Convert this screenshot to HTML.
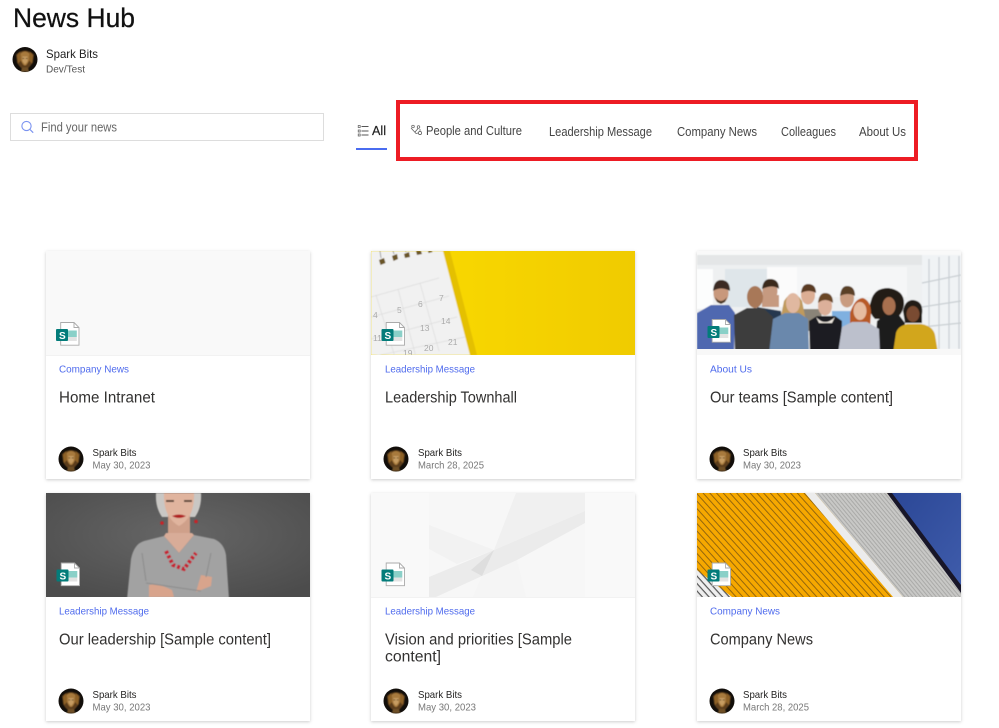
<!DOCTYPE html>
<html lang="en"><head><meta charset="utf-8"><title>News Hub</title>
<style>
html,body{margin:0;padding:0;background:#fff;width:999px;height:728px;overflow:hidden}
svg{display:block}
text{font-family:"Liberation Sans",sans-serif}
.cat{font-size:10.5px;fill:#4f6bed}
.ttl{font-size:15.5px;fill:#323130}
.nm{font-size:10.5px;fill:#252423}
.dt{font-size:10.5px;fill:#777}
.nav{font-size:12.5px;fill:#444}
</style></head><body>
<svg width="999" height="728" viewBox="0 0 999 728" xmlns="http://www.w3.org/2000/svg">
<defs>
<filter id="sh" x="-5%" y="-5%" width="110%" height="110%"><feDropShadow dx="0" dy="1" stdDeviation="1.6" flood-color="#000" flood-opacity=".2"/></filter>
<filter id="b" x="-5%" y="-5%" width="110%" height="110%"><feGaussianBlur stdDeviation=".55"/></filter>
<filter id="b2" x="-10%" y="-10%" width="120%" height="120%"><feGaussianBlur stdDeviation=".5"/></filter>
<g id="av">
<circle r="12.5" fill="#120e0a"/>
<g filter="url(#b2)">
<path d="M-9-5Q0-13 9-5L8 3Q5 7 3 9L-3 9Q-6 7-8 3Z" fill="#5c3c1a"/>
<path d="M-8-4L-5-8-4 1-7 4ZM8-4L5-8 4 1 7 4Z" fill="#8f6228"/>
<path d="M-4.500-6Q0-10 4.500-6L4 1Q2 6 0 6Q-2 6-4 1Z" fill="#a87a3c"/>
<path d="M-2.500-3H2.500V2L0 5-2.500 2Z" fill="#c69c62"/>
<path d="M-3 8H3L4 12H-4Z" fill="#6e5028"/>
<path d="M-2.500-1.500H-.8V-.7H-2.500ZM.8-1.500H2.500V-.7H.8Z" fill="#3a2510"/>
</g>
</g>
<g id="sp">
<path d="M14.7 71.500H28L33 76.500V94.200H14.700Z" fill="#fff" stroke="#aaa" stroke-width=".9"/>
<path d="M28 71.500V76.500H33" fill="none" stroke="#aaa" stroke-width=".9"/>
<rect x="21" y="79.500" width="9.800" height="6.500" fill="#8ad0c8"/>
<rect x="21" y="86" width="9.800" height="4" fill="#e3e3e3"/>
<rect x="10" y="78" width="12" height="12" rx="1" fill="#037c7a"/>
<text x="13" y="88" font-size="10" font-weight="700" fill="#fff">S</text>
</g>
<pattern id="st" width="5" height="5" patternUnits="userSpaceOnUse" patternTransform="rotate(48)"><rect width="5" height="5" fill="#f6a800"/><rect width="5" height="1" fill="#94660c"/></pattern>
<pattern id="st2" width="3" height="3" patternUnits="userSpaceOnUse" patternTransform="rotate(50)"><rect width="3" height="3" fill="#c8c8c6"/><rect width="3" height="1" fill="#aaaaa8"/></pattern>
<pattern id="st3" width="5" height="5" patternUnits="userSpaceOnUse" patternTransform="rotate(48)"><rect width="5" height="5" fill="#eee"/><rect width="5" height="1.200" fill="#555"/></pattern>
<linearGradient id="yl" x1="0" x2="1"><stop offset="0" stop-color="#fbdc00"/><stop offset="1" stop-color="#f0cb00"/></linearGradient>
<linearGradient id="bl" x1="0" x2="1" y1="0" y2="1"><stop offset="0" stop-color="#2b4796"/><stop offset="1" stop-color="#3f5cab"/></linearGradient>
<radialGradient id="gr" cx=".5" cy=".4" r=".7"><stop offset="0" stop-color="#666"/><stop offset="1" stop-color="#4c4c4c"/></radialGradient>
</defs>

<text x="13" y="27" font-size="27" fill="#111" stroke="#111" stroke-width=".25" textLength="122" lengthAdjust="spacingAndGlyphs">News Hub</text>
<use href="#av" x="25" y="59.500"/>
<text x="46" y="58" font-size="12" fill="#222" textLength="52" lengthAdjust="spacingAndGlyphs">Spark Bits</text>
<text x="46" y="72.500" font-size="10.500" fill="#555" textLength="39" lengthAdjust="spacingAndGlyphs">Dev/Test</text>

<rect x="10.500" y="113.500" width="313" height="27" fill="#fff" stroke="#ddd"/>
<circle cx="26.500" cy="126" r="4.600" fill="none" stroke="#7b93f0" stroke-width="1.100"/>
<path d="M30 129.500L33.200 132.700" stroke="#7b93f0" stroke-width="1.200"/>
<text x="41" y="131.500" font-size="12.500" fill="#666" textLength="76" lengthAdjust="spacingAndGlyphs">Find your news</text>

<path d="M361.500 126.500H368.500M361.500 131H368.500M361.500 135H368.500" stroke="#555" stroke-width=".9"/>
<rect x="358.200" y="125.500" width="2" height="2" fill="none" stroke="#555" stroke-width=".7"/>
<rect x="358.200" y="130" width="2" height="2" fill="none" stroke="#555" stroke-width=".7"/>
<rect x="358.200" y="134" width="2" height="2" fill="none" stroke="#555" stroke-width=".7"/>
<text x="372" y="135" font-size="12.500" fill="#222" stroke="#222" stroke-width=".2" textLength="14" lengthAdjust="spacingAndGlyphs">All</text>
<rect x="356" y="148" width="31" height="2" fill="#4a6cf0"/>

<g fill="none" stroke="#555" stroke-width=".7">
<circle cx="413" cy="126.500" r="1.300"/><circle cx="418.500" cy="127" r="1.300"/><circle cx="420" cy="133" r="1.600"/>
<path d="M411 128L416 133.500 418 133M418 128.500L415 132M420 129V131"/>
</g>
<text class="nav" x="426" y="135" textLength="96" lengthAdjust="spacingAndGlyphs">People and Culture</text>
<text class="nav" x="549" y="136" textLength="103" lengthAdjust="spacingAndGlyphs">Leadership Message</text>
<text class="nav" x="677" y="136" textLength="80" lengthAdjust="spacingAndGlyphs">Company News</text>
<text class="nav" x="781" y="136" textLength="55" lengthAdjust="spacingAndGlyphs">Colleagues</text>
<text class="nav" x="859" y="136" textLength="47" lengthAdjust="spacingAndGlyphs">About Us</text>
<rect x="398" y="102" width="518" height="57" fill="none" stroke="#ed1c24" stroke-width="4"/>

<!-- card 1 -->
<rect x="46" y="251" width="264" height="228" fill="#fff" filter="url(#sh)"/>
<svg x="46" y="251" width="264" height="104" viewBox="0 0 264 104">
<rect width="264" height="104" fill="#f9f9f9"/><use href="#sp"/>
</svg>
<rect x="46" y="355" width="264" height="1" fill="#f2f2f2"/>
<text class="cat" x="59" y="372.500" textLength="70" lengthAdjust="spacingAndGlyphs">Company News</text>
<text class="ttl" x="59" y="402.500" textLength="96" lengthAdjust="spacingAndGlyphs">Home Intranet</text>
<use href="#av" x="71" y="459"/>
<text class="nm" x="92.500" y="456" textLength="44" lengthAdjust="spacingAndGlyphs">Spark Bits</text>
<text class="dt" x="92.500" y="468.500" textLength="58" lengthAdjust="spacingAndGlyphs">May 30, 2023</text>

<!-- card 2 -->
<rect x="371" y="251" width="264" height="228" fill="#fff" filter="url(#sh)"/>
<svg x="371" y="251" width="264" height="104" viewBox="0 0 264 104">
<rect width="264" height="104" fill="url(#yl)"/>
<g filter="url(#b)">
<path d="M72 0H79L106 104H99Z" fill="#e4c000"/>
<path d="M0 0H72L99 104H0Z" fill="#f1f1f1"/>
<g stroke="#dcdcdc" stroke-width=".7" fill="none">
<path d="M0 46L68 27M0 66L78 45M0 88L86 66M0 106L94 86"/>
<path d="M5 44L24 106M27 38L45 106M49 32L68 100"/>
</g>
<g fill="#6a5428"><path d="M8 9l5-2 1.500 5-5 2zM21 5l5-2 1 5-4.500 2zM33 3l5-2 1 5-5 1zM45 0l5 0 1 3-5 1zM57 0h4l.5 1-4 1z"/></g>
<g stroke="#888" stroke-width=".8" fill="none"><path d="M10 7L9 0M23 3L22 0M35 1L34.500 0"/></g>
</g>
<g fill="#aaa" font-size="8.500">
<text x="2" y="67">4</text><text x="26" y="62">5</text><text x="47" y="56">6</text><text x="68" y="50">7</text>
<text x="2" y="90">11</text><text x="49" y="80">13</text><text x="70" y="73">14</text><text x="53" y="100">20</text><text x="77" y="94">21</text><text x="32" y="105">19</text>
</g>
<use href="#sp" x=".5"/>
</svg>
<text class="cat" x="385" y="372.500" textLength="90" lengthAdjust="spacingAndGlyphs">Leadership Message</text>
<text class="ttl" x="385" y="402.500" textLength="132" lengthAdjust="spacingAndGlyphs">Leadership Townhall</text>
<use href="#av" x="396" y="459"/>
<text class="nm" x="418" y="456" textLength="44" lengthAdjust="spacingAndGlyphs">Spark Bits</text>
<text class="dt" x="418" y="468.500" textLength="66" lengthAdjust="spacingAndGlyphs">March 28, 2025</text>

<!-- card 3 -->
<rect x="697" y="251" width="264" height="228" fill="#fff" filter="url(#sh)"/>
<svg x="697" y="251" width="264" height="104" viewBox="0 0 264 104">
<rect width="264" height="104" fill="#f9f9f9"/>
<g filter="url(#b)">
<rect y="4" width="264" height="94" fill="#eef0f1"/>
<rect y="4" width="264" height="10" fill="#e4e6e7"/>
<rect x="28" y="18" width="44" height="38" fill="#dfe6ea"/>
<rect x="100" y="16" width="110" height="30" fill="#f5f6f7"/>
<rect x="70" y="16" width="30" height="40" fill="#fbfbfb"/>
<rect x="0" y="18" width="16" height="40" fill="#fcfdfd"/>
<rect x="225" y="4" width="39" height="94" fill="#f0f3f5"/>
<g stroke="#c8ced2" stroke-width="1.200"><path d="M232 8V98M242 6V98M252 5V98M262 5V98M225 32L264 24M225 56L264 50M225 76L264 72"/></g>
<path d="M60 56L84 60 86 84H60Z" fill="#283850"/>
<path d="M104 58H124L126 80H104Z" fill="#8a8478"/>
<path d="M135 60H165L170 85H135Z" fill="#7fb0e0"/>
<path d="M65 56H82V44H65Z" fill="#c69a80"/>
<ellipse cx="73" cy="40" rx="7.500" ry="10" fill="#c69a80"/><path d="M65 38Q66 28 73 28 82 28 82 38 76 33 65 38Z" fill="#3a2a1e"/>
<ellipse cx="111" cy="44" rx="7" ry="9.500" fill="#dcae94"/><path d="M104 42Q105 33 111 33 119 33 119 42 112 38 104 42Z" fill="#5a3a20"/>
<ellipse cx="150" cy="47" rx="7" ry="9.500" fill="#c99c80"/><path d="M143 45Q144 35 150 35 158 35 158 45 151 41 143 45Z" fill="#5a4028"/>
<path d="M0 62L14 54H32L38 62 37 102H0Z" fill="#5068b0"/>
<ellipse cx="24" cy="42" rx="7.500" ry="10.500" fill="#c8987c"/><path d="M16 40Q17 29 24 29 33 29 33 40 24 35 16 40Z" fill="#3a2c20"/><path d="M18 46Q24 54 30 46L28 51 24 53 20 51Z" fill="#4a3828"/>
<path d="M37 64L50 57H66L76 66 75 102H38Z" fill="#3e3e3e"/>
<ellipse cx="58" cy="46" rx="8" ry="11" fill="#a87858"/>
<path d="M87 50Q96 36 105 50L109 70H83Z" fill="#c09a5c"/>
<path d="M72 102L76 68 88 62H102L111 68 112 102Z" fill="#6a88ac"/>
<ellipse cx="96" cy="52" rx="7" ry="10" fill="#e0b8a0"/>
<path d="M113 102L112 70 120 65H138L145 70 144 102Z" fill="#1c1c20"/>
<path d="M119 66Q128 76 138 66L135 72H122Z" fill="#efe8e0"/>
<ellipse cx="128" cy="55" rx="7" ry="9.500" fill="#dcb09a"/><path d="M121 52Q122 42 128 42 136 42 136 52 128 46 121 52Z" fill="#6a4628"/>
<path d="M174 50Q177 37 191 37 208 39 207 54 205 66 196 68H178Q170 60 174 50Z" fill="#241c18"/>
<path d="M178 102L180 70 188 64H202L208 72 204 102Z" fill="#1e1c1e"/>
<ellipse cx="192" cy="55" rx="6.500" ry="9" fill="#a87050"/>
<path d="M153 62Q158 47 166 47 174 50 174 62L173 76H153Z" fill="#b85a28"/>
<path d="M141 102L145 76 155 71H170L182 78 183 102Z" fill="#bcc0cc"/>
<ellipse cx="163" cy="60" rx="6.500" ry="9" fill="#e6bca0"/>
<path d="M206 60Q208 49 216 49 227 50 225 64L225 72H208Z" fill="#201a18"/>
<ellipse cx="216" cy="63" rx="6.500" ry="8" fill="#7a4c30"/>
<path d="M196 102L199 82Q201 75 210 73H224Q236 75 238 84L241 102Z" fill="#d2a61c"/>
</g>
<rect y="98" width="264" height="6" fill="#f8f8f8"/>
<use href="#sp" y="-3" x="0.5"/>
</svg>
<text class="cat" x="710" y="372.500" textLength="42" lengthAdjust="spacingAndGlyphs">About Us</text>
<text class="ttl" x="710" y="402.500" textLength="183" lengthAdjust="spacingAndGlyphs">Our teams [Sample content]</text>
<use href="#av" x="722" y="459"/>
<text class="nm" x="743" y="456" textLength="44" lengthAdjust="spacingAndGlyphs">Spark Bits</text>
<text class="dt" x="743" y="468.500" textLength="58" lengthAdjust="spacingAndGlyphs">May 30, 2023</text>

<!-- card 4 -->
<rect x="46" y="493" width="264" height="228" fill="#fff" filter="url(#sh)"/>
<svg x="46" y="493" width="264" height="104" viewBox="0 0 264 104">
<rect width="264" height="104" fill="url(#gr)"/>
<g filter="url(#b)">
<path d="M110 0H155Q156 14 149 24H116Q109 14 110 0Z" fill="#c9c7c4"/>
<path d="M122 22H144V44H122Z" fill="#cfa08a"/>
<path d="M118 0H148Q149 24 133 33 117 24 118 0Z" fill="#e0b49e"/>
<path d="M120 7H128V9H120ZM138 7H146V9H138Z" fill="#5a4438"/>
<path d="M126 23Q133 20 140 23 133 27 126 23Z" fill="#b02024"/>
<circle cx="116" cy="30" r="1.800" fill="#c82026"/><circle cx="150" cy="28.500" r="1.800" fill="#c82026"/>
<path d="M81 106L85 66Q88 51 98 48L118 43 133 60 148 42 168 46Q178 50 180 62L183 106Z" fill="#a2a2a2"/>
<path d="M118 43L133 60 148 42 146 40H120Z" fill="#d8ac98"/>
<path d="M120 58L127 72 138 76 150 60" fill="none" stroke="#c42432" stroke-width="4" stroke-dasharray="3 2"/>
<path d="M103 92Q112 90 126 97L128 104H103ZM155 82L166 84 165 93 150 99Z" fill="#d8a48c"/>
<path d="M100 90L155 98M165 60L160 84M96 60L100 88" stroke="#8c8c8c" stroke-width="1" fill="none"/>
</g>
<use href="#sp" y="-1.500" x=".5"/>
</svg>
<text class="cat" x="59" y="614.500" textLength="90" lengthAdjust="spacingAndGlyphs">Leadership Message</text>
<text class="ttl" x="59" y="644.500" textLength="212" lengthAdjust="spacingAndGlyphs">Our leadership [Sample content]</text>
<use href="#av" x="71" y="701"/>
<text class="nm" x="92.500" y="698" textLength="44" lengthAdjust="spacingAndGlyphs">Spark Bits</text>
<text class="dt" x="92.500" y="710.500" textLength="58" lengthAdjust="spacingAndGlyphs">May 30, 2023</text>

<!-- card 5 -->
<rect x="371" y="493" width="264" height="228" fill="#fff" filter="url(#sh)"/>
<svg x="371" y="493" width="264" height="104" viewBox="0 0 264 104">
<rect width="264" height="104" fill="#f9f9f9"/>
<rect x="58" width="156" height="104" fill="#f7f7f7"/>
<path d="M145 0H214V18L123 57Z" fill="#f0f0f0"/>
<path d="M145 0L123 57 102 104H58V84L123 57Z" fill="none"/>
<path d="M123 57L111 83 102 104H155L146 67Z" fill="#f4f4f4" opacity=".6"/>
<path d="M58 32L123 57 86 71 58 56Z" fill="#f2f2f2"/>
<path d="M58 84L123 57 214 18V30L146 67 111 83 65 104H58Z" fill="#ebebeb"/>
<path d="M123 57L111 83 100 77Z" fill="#dedede"/>
<use href="#sp" y="-1.500" x=".5"/>
</svg>
<rect x="371" y="597" width="264" height="1" fill="#f2f2f2"/>
<text class="cat" x="385" y="614.500" textLength="90" lengthAdjust="spacingAndGlyphs">Leadership Message</text>
<text class="ttl" x="385" y="644.500" textLength="187" lengthAdjust="spacingAndGlyphs">Vision and priorities [Sample</text>
<text class="ttl" x="385" y="661.500" textLength="56" lengthAdjust="spacingAndGlyphs">content]</text>
<use href="#av" x="396" y="701"/>
<text class="nm" x="418" y="698" textLength="44" lengthAdjust="spacingAndGlyphs">Spark Bits</text>
<text class="dt" x="418" y="710.500" textLength="58" lengthAdjust="spacingAndGlyphs">May 30, 2023</text>

<!-- card 6 -->
<rect x="697" y="493" width="264" height="228" fill="#fff" filter="url(#sh)"/>
<svg x="697" y="493" width="264" height="104" viewBox="0 0 264 104">
<rect width="264" height="104" fill="url(#st)"/>
<path d="M0 77L35 104H0Z" fill="url(#st3)"/>
<path d="M108 0H118L206 104H196Z" fill="#ececec"/>
<path d="M118 0H190L264 94V104H206Z" fill="url(#st2)"/>
<path d="M190 0H197L264 88V100Z" fill="#181628"/>
<path d="M195 0H264V92Z" fill="url(#bl)"/>
<use href="#sp" y="-1.500" x=".5"/>
</svg>
<text class="cat" x="710" y="614.500" textLength="70" lengthAdjust="spacingAndGlyphs">Company News</text>
<text class="ttl" x="710" y="644.500" textLength="103" lengthAdjust="spacingAndGlyphs">Company News</text>
<use href="#av" x="722" y="701"/>
<text class="nm" x="743" y="698" textLength="44" lengthAdjust="spacingAndGlyphs">Spark Bits</text>
<text class="dt" x="743" y="710.500" textLength="66" lengthAdjust="spacingAndGlyphs">March 28, 2025</text>
</svg>
</body></html>
